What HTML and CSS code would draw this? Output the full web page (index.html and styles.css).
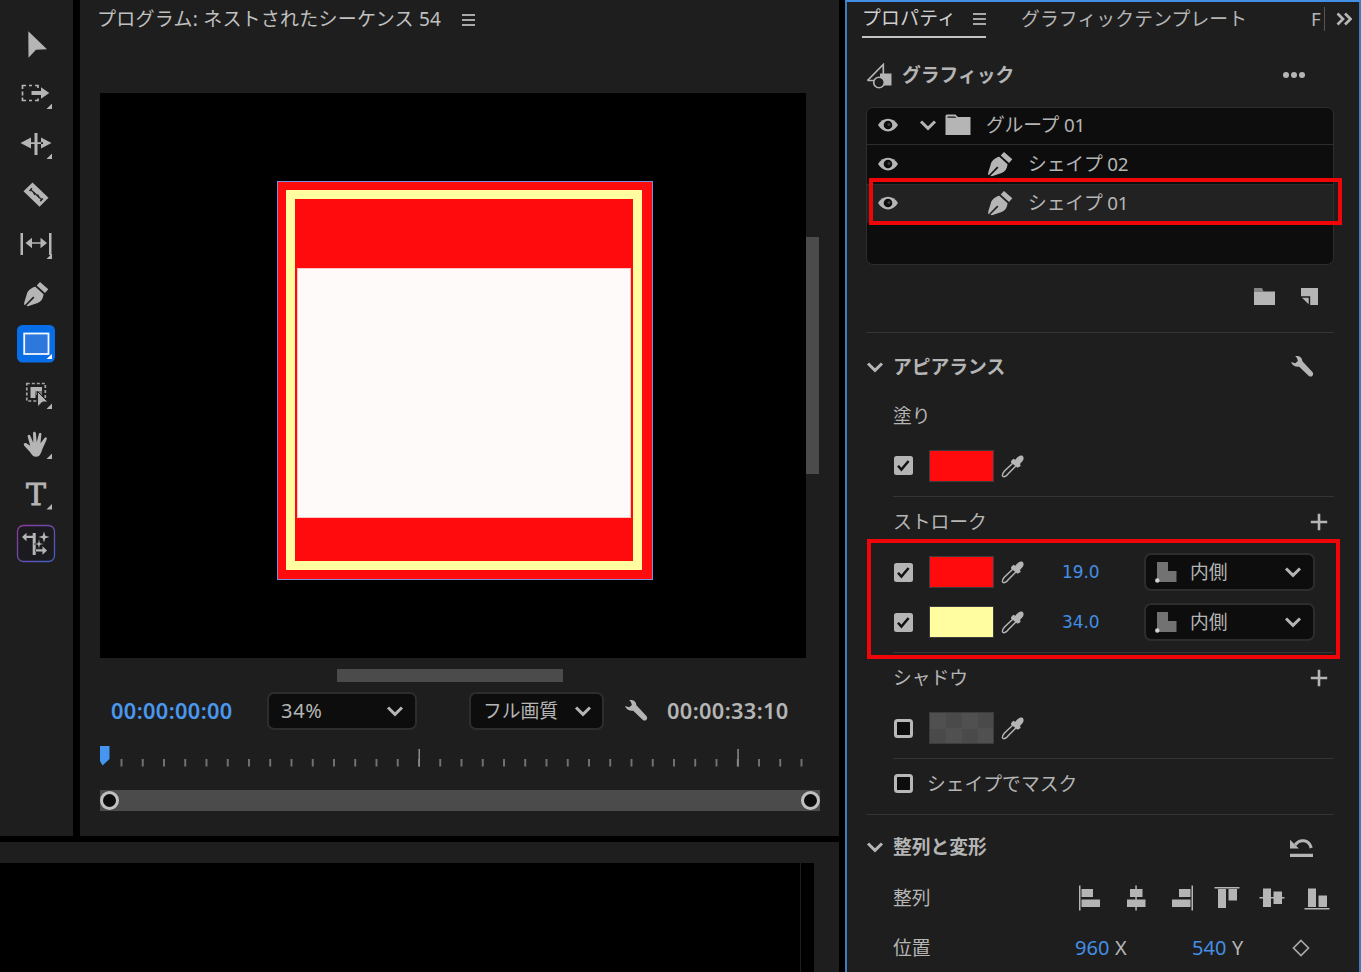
FILE: index.html
```html
<!DOCTYPE html>
<html lang="ja">
<head>
<meta charset="utf-8">
<title>プログラム: ネストされたシーケンス 54</title>
<link rel="stylesheet" href="styles.css">
</head>
<body>
<svg class="defs" width="0" height="0">
  <defs>
    <linearGradient id="aiBorder" x1="0" y1="0" x2="1" y2="1"><stop offset="0" stop-color="#91389c"/><stop offset="1" stop-color="#3e5fc4"/></linearGradient>
    <pattern id="minorTicks" x="-0.75" width="21.25" height="22" patternUnits="userSpaceOnUse"><path d="M.25 13h1.500v7.500H.25z" fill="#8b8b8b"/></pattern>
    <symbol id="corner" viewBox="0 0 6 6"><path d="M6 0v5.500H.5z"/></symbol>
    <symbol id="pen" viewBox="12 12 26 26"><path d="M29 13 37.300 20.200 34 24 25.700 16.500zM24.300 17.800 32.600 25.300C32 30 30 33 26.600 34L17 37.300 15.400 36.800 23.400 28.800 22.200 27.600 14.200 35.800C13 37 13 34.500 13.400 33L16 24.500C17 21.500 20.500 18.500 24.300 17.800z"/></symbol>
    <symbol id="chevron" viewBox="0 0 18 12"><path d="M2 2.500 9 9.300l7-6.800" fill="none" stroke="#b5b5b5" stroke-width="3"/></symbol>
    <symbol id="wrench" viewBox="0 0 24 24"><path d="M5.200 1.100c4-.9 7.100 1.400 7.200 5.100l10 10.800c2.200 2.700-.8 6-3.500 4L9.200 11.700C5.400 12.200 2.100 10.400 1 6.900l4.200 1.400 2.700-2.400-1-2.900z"/></symbol>
    <symbol id="eye" viewBox="0 0 22 14"><path d="M1 7C6-1.500 16-1.500 21 7 16 15.500 6 15.500 1 7z"/><circle cx="11" cy="7" r="4.300" fill="#0d0d0d"/><circle cx="12" cy="6.500" r="1.500" fill="#3b3b3b"/></symbol>
    <symbol id="dropper" viewBox="0 0 24 24"><path d="M12.500 8.500 3.500 17c-1.800 2-2.200 3-2.100 4.700.6 1.300 2.500 1.200 4 0l2-2.300 8.700-8.700" fill="none" stroke="#b5b5b5" stroke-width="1.500"/><path d="M10 7.300l2.300-2.500 2.100 1C16.500 2.900 18.700 1 21 1.600c2 1.200 1.900 3.300 1 4.900L19 10l.7 2-3.200 1.800L10 8.500z"/></symbol>
    <symbol id="check" viewBox="0 0 19 19"><rect width="19" height="19" rx="2.500"/><path d="M4 9.700 7.400 13.600 14.600 5" fill="none" stroke="#111" stroke-width="2.500"/></symbol>
    <symbol id="uncheck" viewBox="0 0 19 19"><rect x="1.500" y="1.500" width="16" height="16" rx="2" fill="#0d0d0d" stroke="#b8b8b8" stroke-width="3"/></symbol>
    <symbol id="inside" viewBox="0 0 22 22"><path d="M2 1h11v9h8.500v11H2z" fill="#727272"/><circle cx="2.300" cy="19.500" r="2.200" fill="#d0d0d0"/></symbol>
    <symbol id="plus" viewBox="0 0 18 18"><path d="M9 .8v16.400M.8 9h16.400" stroke="#b5b5b5" stroke-width="2.600"/></symbol>
  </defs>
</svg>

<main class="workspace">
  <div class="left">
    <nav class="tools">
      <svg viewBox="0 0 50 50"><path d="M17.300 12.300 36 30.300 25 30.700 17.500 38.700z"/></svg>
      <svg viewBox="0 0 50 50"><path d="M11.500 20v-3.500H15M18 16.500h3M24 16.500h3V19M11.500 22.500v4M11.500 28.500v3H15M18 31.500h3M24 31.500h3V29.500" fill="none" stroke="#b5b5b5" stroke-width="1.700"/><path d="M20.500 22H30v-3.700L38.300 24 30 29.700V26h-9.500z"/><use href="#corner" x="35" y="34.500" width="6" height="6"/></svg>
      <svg viewBox="0 0 50 50"><path d="M23.500 14h3v22h-3zM9.500 24 20 18.500v11zM40.500 24 30 18.500v11zM18 23.300h14v1.600H18z"/><use href="#corner" x="35" y="34.500" width="6" height="6"/></svg>
      <svg viewBox="0 0 50 50"><path d="M21.500 13.500 37.500 28.800 28.500 37.700 12.500 22.200z"/><path d="M19.500 20.500 31 31" stroke="#222" stroke-width="1.300"/><path d="M21 19.200l-2.500 2.700M31.800 29.500l-2.500 2.700M22.500 23l1.500 3M26.500 25.500l1.500 3" stroke="#222" stroke-width="1.500"/></svg>
      <svg viewBox="0 0 50 50"><path d="M9.500 14h2.500v22H9.500zM38 14h2.500v22H38zM14.500 24l6.500-5.200v4.400h8.500v-4.400L36 24l-6.500 5.200v-4.400H21v4.400z"/><use href="#corner" x="35" y="34.500" width="6" height="6"/></svg>
      <svg viewBox="0 0 50 50"><use href="#pen" x="12" y="12" width="26" height="26"/></svg>
      <svg viewBox="0 0 50 50"><rect x="6" y="6" width="38" height="37.500" rx="5.500" fill="#086ee8"/><rect x="13.200" y="14.500" width="24.300" height="20.500" fill="#2d78dc" stroke="#f4f7ff" stroke-width="1.800"/><path d="M41 35v5h-5.500z" fill="#fff"/></svg>
      <svg viewBox="0 0 50 50"><rect x="15.800" y="14.500" width="18.500" height="17.500" fill="none" stroke="#a5a5a5" stroke-width="1.700" stroke-dasharray="3 2"/><path d="M19.500 18H31v4.500h-6.500V29h-5z"/><path d="M24.500 22.500H31V26h-6.500z" fill="#777"/><path d="M26.500 22.500 37 33h-5.500l-5 5z" stroke="#1e1e1e"/><use href="#corner" x="35" y="34.500" width="6" height="6"/></svg>
      <svg viewBox="0 0 50 50"><path transform="translate(.7 .7)" d="M18.500 32.500 12.500 26c-1.500-2.200.9-3.300 2.500-2.100l3.500 2.100-2.500-9c-.4-2.200 1.900-2.700 2.600-1l3 7-.3-9.500c.2-2 2.700-2 2.900 0l.8 9 2.200-8.500c.7-1.800 2.800-1.100 2.500.8l-.9 8.700 4-5.200c1.400-1.500 2.900-.3 2.200 1.500l-4.500 10C29 34.500 28 37 24.500 37c-3 0-4.500-2-6-4.500z"/><use href="#corner" x="35" y="34.500" width="6" height="6"/></svg>
      <svg viewBox="0 0 50 50"><text class="type-t" x="25" y="35.500" text-anchor="middle">T</text><use href="#corner" x="35" y="35" width="6" height="6"/></svg>
      <svg viewBox="0 0 50 50"><rect x="6.500" y="6.500" width="37" height="36" rx="6" fill="#1b1b1f" stroke="url(#aiBorder)" stroke-width="1.300"/><path d="M21.700 14h3v22h-3zM11 18l4.500-4.200v3H22v2.200h-6.500v3.200zM36 31.500l-4.500-4.200v3H24v2.200h7.500v3.200zM33 12.500l1.300 4.200 4.200 1.300-4.200 1.300-1.300 4.200-1.300-4.200-4.200-1.300 4.200-1.300z"/><path d="M28 20l1.100 4 3.900 1-3.900 1-1.100 4-1.100-4-3.900-1 3.900-1z" stroke="#1e1e1e" stroke-width=".5"/></svg>
    </nav>

    <section class="program">
      <header class="program-title"><span>プログラム: ネストされたシーケンス 54</span><i class="menu"></i></header>
      <div class="monitor-row">
        <div class="monitor">
          <div class="shape"><div class="shape-frame"><div class="shape-inner"></div></div></div>
        </div>
        <div class="vscroll"></div>
      </div>
      <div class="hscroll"></div>
      <div class="controls">
        <span class="timecode current">00:00:00:00</span>
        <div class="select zoom"><span>34%</span><svg class="chev"><use href="#chevron"/></svg></div>
        <div class="select quality"><span>フル画質</span><svg class="chev"><use href="#chevron"/></svg></div>
        <svg class="wrench"><use href="#wrench"/></svg>
        <span class="timecode">00:00:33:10</span>
      </div>
      <svg class="ruler" viewBox="0 0 720 22"><rect x="20" y="0" width="683" height="22" fill="url(#minorTicks)"/><path d="M318.500 3h1.500v17.500h-1.500zM637.300 3h1.500v17.500h-1.500z" fill="#8b8b8b"/><path d="M0 0h9.500v13L2.500 19.500 0 15z" fill="#4596f0"/></svg>
      <div class="range"><i></i><i></i></div>
    </section>

    <section class="timeline"><div class="timeline-tracks"></div><div class="timeline-scroll"></div></section>
  </div>

  <aside class="props">
    <header class="tabs">
      <div class="tab active"><span>プロパティ</span><i class="menu"></i></div>
      <div class="tab next">グラフィックテンプレート</div>
      <div class="tab cut">F</div>
      <svg class="more" viewBox="0 0 16 14"><path d="M1.500 1.500 7 7l-5.500 5.500M9 1.500 14.500 7 9 12.500" fill="none" stroke="#b5b5b5" stroke-width="2.700"/></svg>
    </header>

    <div class="row graphic">
      <svg class="g-icon" viewBox="0 0 26 26"><path d="M1.500 17.500 17.300 1.500v16" fill="none" stroke="#b5b5b5" stroke-width="1.700"/><path d="M1.500 17.500h10" stroke="#b5b5b5" stroke-width="1.500"/><path d="M14 10.500h11.500v12H14z"/><circle cx="13" cy="19.500" r="5.300" fill="#1e1e1e" stroke="#b5b5b5" stroke-width="1.600"/></svg>
      <b>グラフィック</b>
      <svg class="dots" viewBox="0 0 24 8"><circle cx="4" cy="4" r="3"/><circle cx="12" cy="4" r="3"/><circle cx="20" cy="4" r="3"/></svg>
    </div>

    <div class="layers">
      <div class="layer group"><svg class="eye"><use href="#eye"/></svg><svg class="chev"><use href="#chevron"/></svg><svg class="folder" viewBox="0 0 26 22"><path d="M.5 21V2Q.5.500 2 .500h8.500L13 3h12.500v18z"/><path d="M2.500 2.500h7.500l1.500 1.300H2.500z" fill="#161616"/></svg><span>グループ 01</span></div>
      <div class="layer"><svg class="eye"><use href="#eye"/></svg><svg class="pen"><use href="#pen"/></svg><span>シェイプ 02</span></div>
      <div class="layer selected"><svg class="eye"><use href="#eye"/></svg><svg class="pen"><use href="#pen"/></svg><span>シェイプ 01</span></div>
    </div>

    <div class="row actions">
      <svg width="21" height="17" viewBox="0 0 21 17"><path d="M0 0h8l1.500 3.500H0z" fill="#858585"/><path d="M0 3.500h21V17H0z"/></svg>
      <svg width="17" height="17" viewBox="0 0 17 17"><path d="M0 0h17v17H9.200V8.300H0z"/><path d="M1 9.800h6.700v6.500z"/></svg>
    </div>

    <div class="row section appearance"><svg class="chev"><use href="#chevron"/></svg><b>アピアランス</b><svg class="wrench"><use href="#wrench"/></svg></div>
    <div class="row sub label">塗り</div>
    <div class="row sub swatch-row fill-row"><svg class="box"><use href="#check"/></svg><i class="swatch red"></i><svg class="dropper"><use href="#dropper"/></svg></div>
    <div class="row sub label ruled"><span>ストローク</span><svg class="plus"><use href="#plus"/></svg></div>
    <div class="row sub swatch-row"><svg class="box"><use href="#check"/></svg><i class="swatch red"></i><svg class="dropper"><use href="#dropper"/></svg><span class="width">19.0</span><div class="select side"><svg class="inside"><use href="#inside"/></svg><span>内側</span><svg class="chev"><use href="#chevron"/></svg></div></div>
    <div class="row sub swatch-row last-stroke"><svg class="box"><use href="#check"/></svg><i class="swatch cream"></i><svg class="dropper"><use href="#dropper"/></svg><span class="width">34.0</span><div class="select side"><svg class="inside"><use href="#inside"/></svg><span>内側</span><svg class="chev"><use href="#chevron"/></svg></div></div>
    <div class="row sub label ruled"><span>シャドウ</span><svg class="plus"><use href="#plus"/></svg></div>
    <div class="row sub swatch-row shadow-row"><svg class="box"><use href="#uncheck"/></svg><i class="swatch checker"></i><svg class="dropper"><use href="#dropper"/></svg></div>
    <div class="row sub ruled mask"><svg class="box"><use href="#uncheck"/></svg><span>シェイプでマスク</span></div>
    <div class="row section transform"><svg class="chev"><use href="#chevron"/></svg><b>整列と変形</b><svg class="reset" viewBox="0 0 22 18"><path d="M5 6.500C9 .8 18 .8 20.300 9.500" fill="none" stroke="#b5b5b5" stroke-width="3"/><path d="M0 1.500v8.500h8.500zM0 15h22v3H0z"/></svg></div>
    <div class="row sub align">
      <span>整列</span>
      <div class="align-icons">
        <svg viewBox="0 0 26 26"><path d="M1 .5h1.500v25H1zM3.500 4H15v8H3.500zM3.500 14.500H22v7.500H3.500z"/></svg>
        <svg viewBox="0 0 26 26"><path d="M12.300.5h1.500v25h-1.500zM7 4h12.500v8H7zM4 14.500h18.500v7.500H4z"/></svg>
        <svg viewBox="0 0 26 26"><path d="M23.500.5H25v25h-1.500zM11 4h11.500v8H11zM4 14.500h18.500v7.500H4z"/></svg>
        <svg viewBox="0 0 26 26"><path d="M.5 2h25v1.500H.5zM4 4h8v19H4zM14.500 4h8.500v11.500h-8.500z"/></svg>
        <svg viewBox="0 0 26 26"><path d="M.5 12h25v1.500H.5zM4 3.500h8v18.500H4zM14.500 6.500h8.500v12.500h-8.500z"/></svg>
        <svg viewBox="0 0 26 26"><path d="M.5 23h25v1.500H.5zM4 3.500h8V22H4zM14.500 10.500h8.500V22h-8.500z"/></svg>
      </div>
    </div>
    <div class="row sub position"><span class="p-label">位置</span><span class="num">960</span><span class="axis">X</span><span class="num">540</span><span class="axis">Y</span><svg class="key" viewBox="0 0 18 18"><path d="M9 1.500 16.500 9 9 16.500 1.500 9z" fill="none" stroke="#a8a8a8" stroke-width="1.700"/></svg></div>

    <div class="callout layer-callout"></div>
    <div class="callout stroke-callout"></div>
  </aside>
</main>
</body>
</html>
```
FILE: styles.css
```css
* { box-sizing: border-box; }
body {
  margin: 0;
  background: #000;
  color: #b5b5b5;
  font: 18.8px/28px "Noto Sans", "Noto Sans CJK JP", sans-serif;
  overflow: hidden;
}
svg { display: block; flex: none; fill: #b5b5b5; }
.defs { position: absolute; }
span, b { white-space: nowrap; }
b { font-weight: 700; }

.workspace { display: flex; gap: 6px; width: 1361px; height: 972px; }
.left {
  display: grid;
  grid-template: 836px 130px / 73px 759px;
  gap: 6px 7px;
  width: 839px;
}

/* toolbar */
.tools { background: #1e1e1e; padding: 19px 0 0 11px; }
.tools svg { width: 50px; height: 50px; }
.type-t { font: 400 30px "DejaVu Serif", serif; stroke: #b5b5b5; stroke-width: .8px; }

/* program monitor */
.program { background: #1e1e1e; padding-left: 20px; }
.program-title { display: flex; align-items: center; gap: 21px; height: 37px; margin-left: -3px; color: #c0c0c0; font-size: 19px; letter-spacing: .24px; }
.program-title .menu { margin-top: 2px; }
.menu {
  width: 13px; height: 12px;
  border-top: 2px solid #a8a8a8; border-bottom: 2px solid #a8a8a8;
  background: linear-gradient(#a8a8a8, #a8a8a8) center / 100% 2px no-repeat;
}
.monitor-row { display: flex; margin-top: 56px; }
.monitor { width: 706px; height: 565px; background: #000; padding: 88px 0 0 177px; }
.shape { width: 376px; height: 399px; padding: 8px 10px 9px 8px; background: #ff0a0d; border: 1px solid #7d8fe0; }
.shape-frame { width: 356px; height: 380px; border: 9px solid #fffda0; background: #ff0a0d; padding: 69px 2px 0 2px; }
.shape-inner { width: 334px; height: 250px; background: #fffafa; border: 1px solid #ffc4c4; }
.vscroll { width: 13px; height: 237px; margin-top: 144px; background: #4b4b4b; }
.hscroll { width: 226px; height: 13px; margin: 11px 0 0 237px; background: #4b4b4b; }
.controls { display: flex; align-items: center; height: 38px; margin-top: 10px; }
.timecode { flex: none; font-size: 21.800px; font-weight: 600; width: 122px; letter-spacing: .35px; color: #b5b5b5; }
.current { color: #4a97ee; width: 167px; padding-left: 11px; }
.select { display: flex; flex: none; align-items: center; justify-content: space-between; height: 38px; border: 2px solid #2d2d2d; border-radius: 7px; background: #0d0d0d; }
.zoom { width: 150px; margin-right: 52px; padding: 0 11px 0 12px; font-size: 20px; letter-spacing: .7px; }
.quality { width: 135px; margin-right: 20px; padding: 0 10px 0 12px; }
.chev { width: 18px; height: 12px; }
.wrench { width: 24px; height: 24px; }
.controls .wrench { margin-right: 19px; }
.ruler { width: 720px; height: 22px; margin-top: 16px; }
.range { display: flex; justify-content: space-between; align-items: center; width: 720px; height: 21px; margin-top: 22px; background: #4b4b4b; }
.range i { width: 19px; height: 19px; border: 3px solid #c0c0c0; border-radius: 50%; background: #0d0d0d; }

/* timeline strip */
.timeline { grid-column: 1 / 3; display: flex; gap: 1px; background: #1e1e1e; padding-top: 21px; }
.timeline-tracks { width: 800px; background: #000; }
.timeline-scroll { width: 13px; background: #000; }

/* properties panel */
.props {
  position: relative;
  display: grid;
  grid-template-rows: 38px 69px 158px 67px 68px 31px 65px 51px 50px 55px 51px 55px 56px 66px 35px 57px;
  width: 516px;
  padding: 0 27px 0 21px;
  background: #1e1e1e;
}
.props::after { content: ""; position: absolute; inset: 0 0 -2px 0; border: 2px solid #3d7bbd; border-top-color: #438fe4; }
.row { display: flex; align-items: center; min-width: 0; }
.tabs { display: flex; align-items: center; margin-right: -18px; }
.tab { white-space: nowrap; height: 38px; line-height: 38px; }
.active { display: flex; align-items: center; gap: 17px; width: 124px; margin-left: -4px; border-bottom: 2px solid #c4c4c4; color: #d0d0d0; }
.active span { letter-spacing: .3px; }
.active .menu { margin-top: 2px; }
.next { margin-left: 35px; width: 290px; letter-spacing: .15px; }
.cut { width: 14px; border-right: 1px solid #555; height: 24px; line-height: 24px; overflow: hidden; }
.more { width: 16px; height: 14px; margin-left: 11px; }
.graphic { padding-top: 5px; }
.g-icon { width: 26px; height: 26px; margin-right: 10px; margin-top: 2px; }
.dots { width: 24px; height: 8px; margin-left: auto; margin-right: 28px; }
.layers { border: 1.500px solid #2d2d2d; border-radius: 7px; background: #0d0d0d; overflow: hidden; }
.layer { display: flex; align-items: center; height: 39px; padding: 0 0 2px 10px; }
.layer span { letter-spacing: -.15px; }
.group { height: 37px; border-bottom: 1px solid #2d2d2d; }
.group span { letter-spacing: -.2px; }
.selected { background: #222; border-top: 1px solid #2d2d2d; }
.eye { width: 22px; height: 14px; }
.group .chev { margin-left: 20px; }
.folder { width: 26px; height: 22px; margin: 0 15px 0 8px; }
.pen { width: 26px; height: 26px; margin: 0 15px 0 88px; }
.actions { justify-content: flex-end; gap: 26px; padding: 0 16px 5px 0; }
.section { border-top: 1px solid #343434; }
.section .chev { margin-right: 9px; }
.transform { padding-bottom: 1px; }
.section .wrench, .reset { margin-left: auto; margin-right: 20px; }
.section .reset { width: 23px; height: 19px; margin-right: 21px; }
.sub { margin-left: 27px; }
.label { justify-content: space-between; }
.ruled { border-top: 1px solid #343434; }
.plus { width: 18px; height: 18px; margin-right: 6px; }
.fill-row { padding-top: 4px; }
.last-stroke { padding-bottom: 5px; }
.shadow-row { padding-bottom: 5px; }
.box { width: 19px; height: 19px; margin: 0 16px 0 1px; }
.swatch { width: 65px; height: 32px; margin-right: 7px; border: 1px solid #3c3c3c; }
.red { background: #ff0a0d; }
.cream { background: #fffda0; }
.checker { background: repeating-conic-gradient(#4a4a4a 0 25%, #505050 0 50%) 0 0 / 32px 31px; }
.dropper { width: 24px; height: 24px; }
.width { width: 82px; margin-left: 37px; font: 17px/28px "DejaVu Sans", sans-serif; color: #438fe4; letter-spacing: -.1px; }
.side { width: 171px; padding: 0 11px 0 9px; }
.side .inside { width: 22px; height: 22px; margin-right: 13px; }
.side .chev { margin-left: auto; }
.mask { padding-bottom: 6px; }
.mask .box { margin-right: 14px; }
.align { justify-content: space-between; }
.align-icons { display: flex; justify-content: space-between; width: 252px; margin-right: 4px; }
.align-icons svg { width: 26px; height: 26px; }
.position { padding-top: 8px; }
.p-label { width: 182px; }
.num { width: 40px; font-size: 20px; color: #438fe4; }
.axis { width: 77px; font-size: 20px; }
.key { width: 18px; height: 18px; margin-left: -17px; }

/* annotation boxes drawn over the panel */
.callout { position: absolute; border: 4px solid #f00508; }
.layer-callout { left: 24px; top: 178px; width: 473px; height: 47px; }
.stroke-callout { left: 22px; top: 539px; width: 473px; height: 120px; }
```
